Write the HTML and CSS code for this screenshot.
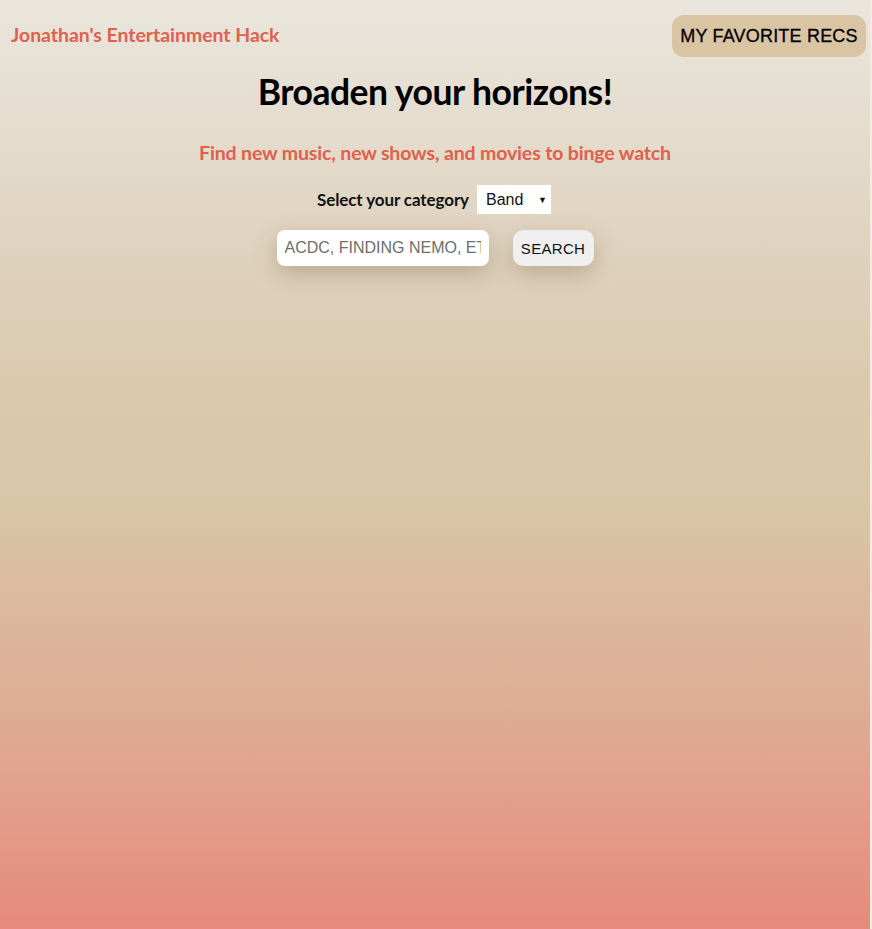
FILE: index.html
```html
<!DOCTYPE html>
<html lang="en">
<head>
<meta charset="utf-8">
<title>Jonathan's Entertainment Hack</title>
<link rel="stylesheet" href="styles.css">
</head>
<body>
<div class="page">
  <header class="topbar">
    <div class="brand">Jonathan's Entertainment Hack</div>
    <button class="fav-btn" type="button">MY FAVORITE RECS</button>
  </header>
  <main class="hero">
    <h1 class="title">Broaden your horizons!</h1>
    <p class="subtitle">Find new music, new shows, and movies to binge watch</p>
    <div class="category-row">
      <label class="category-label" for="cat">Select your category</label>
      <div class="select-box">
        <span class="select-value">Band</span>
        <span class="select-arrow">&#9660;</span>
      </div>
    </div>
    <form class="search-row">
      <input class="search-input" type="text" placeholder="ACDC, FINDING NEMO, ETC">
      <button class="search-btn" type="button">SEARCH</button>
    </form>
  </main>
</div>
</body>
</html>
```

FILE: styles.css
```css
html {
  background: #f3ebe6;
  height: 100%;
}
body {
  margin: 0;
  height: 100%;
}
.page {
  width: 870px;
  min-height: 929px;
  background: linear-gradient(to bottom, #eae6dd 0%, #dccdb5 35%, #d9c4a6 56%, #dfa892 80%, #e78a7b 100%);
  font-family: Lato, "Noto Sans", sans-serif;
  box-sizing: border-box;
}
.topbar {
  display: flex;
  justify-content: space-between;
  align-items: flex-start;
  padding: 15px 4px 0 11px;
  height: 57px;
  box-sizing: border-box;
}
.brand {
  color: #e0604e;
  font-weight: 700;
  font-size: 19.4px;
  margin-top: 8px;
}
.fav-btn {
  background: #d9c4a4;
  border: none;
  border-radius: 12px;
  height: 42px;
  width: 194px;
  font-family: "Liberation Sans", Arial, sans-serif;
  font-size: 18px;
  color: #000;
  padding: 0;
  letter-spacing: 0.2px;
  -webkit-text-stroke: 0.3px #000;
}
.hero {
  display: flex;
  flex-direction: column;
  align-items: center;
}
.title {
  margin: 17px 0 0;
  font-size: 35.5px;
  font-weight: 700;
  color: #000;
  letter-spacing: -0.5px;
  line-height: 1;
}
.subtitle {
  margin: 33px 0 0;
  color: #e0604e;
  font-weight: 700;
  font-size: 19.5px;
  line-height: 1;
  letter-spacing: -0.15px;
}
.category-row {
  display: flex;
  align-items: center;
  gap: 8px;
  margin-top: 23px;
  margin-right: 2px;
}
.category-label {
  font-size: 17px;
  font-weight: 700;
  color: #111;
  letter-spacing: -0.1px;
}
.select-box {
  width: 74px;
  height: 29px;
  background: #fff;
  display: flex;
  align-items: center;
  justify-content: space-between;
  padding: 0 4px 0 9px;
  box-sizing: border-box;
  font-family: "Liberation Sans", Arial, sans-serif;
}
.select-value {
  font-size: 16px;
  color: #111;
}
.select-arrow {
  font-size: 9px;
  color: #111;
}
.search-row {
  display: flex;
  gap: 24px;
  margin: 16px 0 0;
}
.search-input {
  width: 212px;
  height: 36px;
  box-sizing: border-box;
  border: none;
  border-radius: 8px;
  background: #fff;
  padding: 0 8px;
  font-family: "Liberation Sans", Arial, sans-serif;
  font-size: 16px;
  box-shadow: 0 8px 22px rgba(120, 100, 70, 0.35);
  outline: none;
}
.search-input::placeholder {
  color: #6e6e6e;
}
.search-btn {
  width: 81px;
  height: 36px;
  border: none;
  border-radius: 10px;
  background: #efefef;
  font-family: "Liberation Sans", Arial, sans-serif;
  font-size: 15px;
  color: #111;
  padding: 0;
  letter-spacing: 0.3px;
  box-shadow: 0 8px 22px rgba(120, 100, 70, 0.35);
}
```
